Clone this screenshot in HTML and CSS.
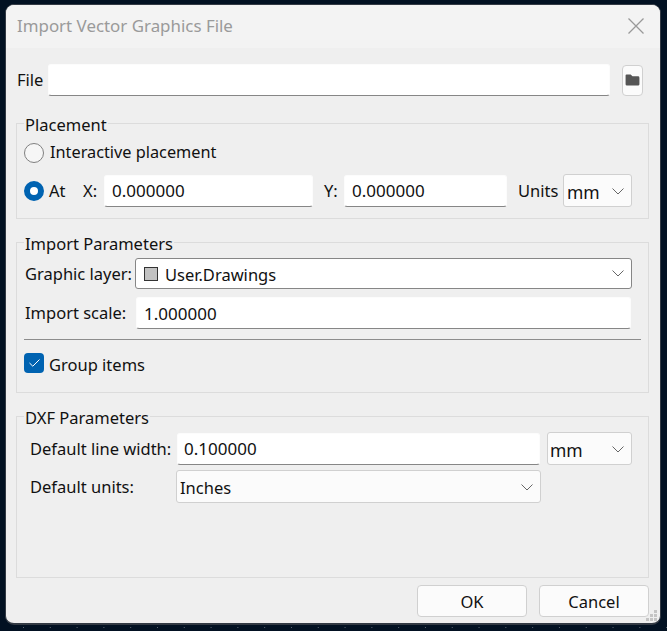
FILE: index.html
```html
<!DOCTYPE html>
<html lang="en">

<head>
    <meta charset="UTF-8">
    <meta name="viewport" content="width=device-width, initial-scale=1.0">
    <title>Import Vector Graphics File</title>
    <link rel="stylesheet" href="styles.css">
</head>

<body>
    <div class="dialog">
        <div class="titlebar">
            <span class="title">Import Vector Graphics File</span>
            <svg class="close" width="18" height="18" viewBox="0 0 18 18">
                <path d="M1.5 1.5 L16.5 16.5 M16.5 1.5 L1.5 16.5" />
            </svg>
        </div>

        <div class="content">
            <div class="file-row">
                <label class="file-label">File</label>
                <input class="field file-field">
                <button class="folder-btn">
                    <svg width="15" height="12" viewBox="0 0 16 13">
                        <path d="M1.5 0.5 H6 L8 2.5 H14 Q15.5 2.5 15.5 4 V11 Q15.5 12.5 14 12.5 H2 Q0.5 12.5 0.5 11 V1.5 Q0.5 0.5 1.5 0.5 Z" />
                    </svg>
                </button>
            </div>

            <fieldset class="group placement">
                <legend>Placement</legend>
                <div class="row radio-row">
                    <span class="radio"></span>
                    <span class="radio-label">Interactive placement</span>
                </div>
                <div class="row at-row">
                    <span class="radio radio-on"></span>
                    <span class="at-label">At</span>
                    <span class="x-label">X:</span>
                    <input class="field x-field" value="0.000000">
                    <span class="y-label">Y:</span>
                    <input class="field y-field" value="0.000000">
                    <span class="units-label">Units</span>
                    <div class="combo units-combo">
                        <span class="mm">mm</span>
                        <svg class="chevron" width="12" height="7" viewBox="0 0 12 7"><path d="M0.5 0.5 L6 6 L11.5 0.5" /></svg>
                    </div>
                </div>
            </fieldset>

            <fieldset class="group import">
                <legend>Import Parameters</legend>
                <div class="row layer-row">
                    <span class="layer-label">Graphic layer:</span>
                    <div class="combo layer-combo">
                        <span class="swatch"></span>
                        <span class="layer-name">User.Drawings</span>
                        <svg class="chevron" width="12" height="7" viewBox="0 0 12 7"><path d="M0.5 0.5 L6 6 L11.5 0.5" /></svg>
                    </div>
                </div>
                <div class="row scale-row">
                    <span class="scale-label">Import scale:</span>
                    <input class="field scale-field" value="1.000000">
                </div>
                <hr class="sep">
                <div class="row check-row">
                    <span class="check">
                        <svg width="11" height="8" viewBox="0 0 11 8"><path d="M0.5 4 L3.8 7.2 L10.5 0.5" /></svg>
                    </span>
                    <span class="check-label">Group items</span>
                </div>
            </fieldset>

            <fieldset class="group dxf">
                <legend>DXF Parameters</legend>
                <div class="row width-row">
                    <span class="dxf-label">Default line width:</span>
                    <input class="field width-field" value="0.100000">
                    <div class="combo dxf-units-combo">
                        <span class="mm">mm</span>
                        <svg class="chevron" width="12" height="7" viewBox="0 0 12 7"><path d="M0.5 0.5 L6 6 L11.5 0.5" /></svg>
                    </div>
                </div>
                <div class="row units-row">
                    <span class="dxf-label">Default units:</span>
                    <div class="combo inches-combo">
                        <span>Inches</span>
                        <svg class="chevron" width="12" height="7" viewBox="0 0 12 7"><path d="M0.5 0.5 L6 6 L11.5 0.5" /></svg>
                    </div>
                </div>
            </fieldset>

            <div class="buttons">
                <button class="btn">OK</button>
                <button class="btn">Cancel</button>
            </div>
        </div>

        <svg class="grip" width="12" height="12" viewBox="0 0 12 12">
            <rect x="8" y="0" width="3" height="3" />
            <rect x="4" y="4" width="3" height="3" />
            <rect x="8" y="4" width="3" height="3" />
            <rect x="0" y="8" width="3" height="3" />
            <rect x="4" y="8" width="3" height="3" />
            <rect x="8" y="8" width="3" height="3" />
        </svg>
    </div>
</body>

</html>
```

FILE: styles.css
```css
* {
    box-sizing: border-box;
}

html,
body {
    height: 100%;
}

body {
    margin: 0;
    overflow: hidden;
    font-family: "Noto Sans", sans-serif;
    font-size: 16.5px;
    color: #111;
    background-color: #021122;
    background-image: linear-gradient(90deg, #5a6470 1px, transparent 1px);
    background-size: 26.8px 1px;
    background-position: 23px 627px;
    background-repeat: repeat-x;
}

.dialog {
    position: relative;
    display: flex;
    flex-direction: column;
    width: 656px;
    height: 621px;
    margin: 4px 0 0 5px;
    background: #efefef;
    border: 1px solid #333a44;
    border-bottom-width: 2px;
    border-radius: 9px;
    overflow: hidden;
}

.titlebar {
    display: flex;
    align-items: center;
    justify-content: space-between;
    flex: none;
    height: 43px;
    padding: 0 15.5px 0 11px;
    background: #f3f3f3;
}

.title {
    margin-bottom: 2px;
    font-size: 16.9px;
    color: #9a9a9a;
}

.close {
    margin-bottom: 2px;
}

.close path {
    fill: none;
    stroke: #999;
    stroke-width: 1.3;
}

.content {
    display: flex;
    flex-direction: column;
    flex: 1;
    padding: 16px 11px 6px 10px;
}

.row {
    display: flex;
    align-items: center;
}

.file-row {
    display: flex;
    align-items: center;
    height: 32px;
    margin-bottom: 16px;
}

.file-label {
    width: 32px;
    padding: 0 0 2px 1px;
}

.field {
    height: 32px;
    padding: 0 7px;
    font: inherit;
    font-size: 17px;
    color: inherit;
    background: #fff;
    border: 1px solid #fcfcfc;
    border-bottom: 1px solid #868686;
    border-radius: 3px;
    outline: none;
}

.file-field {
    width: 562px;
}

.folder-btn {
    display: flex;
    align-items: center;
    justify-content: center;
    width: 21px;
    height: 31px;
    margin-left: 12px;
    padding: 0;
    background: #fbfbfb;
    border: 1px solid #d0d0d0;
    border-radius: 4px;
}

.folder-btn path {
    fill: #555;
}

.group {
    margin: 0 0 12px;
    padding: 0 0 11px 7px;
    width: 633px;
    min-width: 0;
    border: 1px solid #dcdcdc;
}

.group legend {
    height: 23px;
    line-height: 25px;
    margin-left: 0;
    padding: 0 1px;
}

.placement .radio-row {
    height: 32px;
    margin-top: 2px;
}

.radio-label {
    padding: 0 0 2px 1px;
    font-size: 16.3px;
}

.at-row {
    height: 33px;
    margin-top: 5px;
}

.radio {
    flex: none;
    width: 20px;
    height: 20px;
    margin-right: 5px;
    background: #f6f6f6;
    border: 1px solid #808080;
    border-radius: 50%;
}

.radio-on {
    background: #fff;
    border: 6px solid #0063b1;
}

.at-label {
    width: 34px;
}

.x-label {
    width: 21px;
}

.x-field {
    width: 209px;
}

.y-label {
    width: 20px;
    margin-left: 11px;
}

.y-field {
    width: 163px;
}

.units-label {
    width: 45px;
    margin-left: 11px;
}

.combo {
    display: flex;
    align-items: center;
    background: #fbfbfb;
    border: 1px solid #d0d0d0;
    border-radius: 3px;
}

.mm {
    font-size: 17.5px;
}

.chevron {
    flex: none;
    margin-left: auto;
}

.chevron path {
    fill: none;
    stroke: #666;
    stroke-width: 1;
}

.units-combo {
    width: 69px;
    height: 33px;
    padding: 2px 7px 0 3px;
}

.layer-row {
    height: 31px;
    margin-top: 4px;
}

.layer-label {
    width: 111px;
    padding-left: 1px;
}

.layer-combo {
    width: 497px;
    height: 31px;
    padding: 0 7px 0 8px;
    background: #fff;
    border-color: #868686;
}

.layer-name {
    padding-top: 2px;
}

.swatch {
    flex: none;
    width: 14px;
    height: 14px;
    margin-right: 7px;
    background: #c2c2c2;
    border: 1px solid #333;
}

.scale-row {
    height: 32px;
    margin-top: 8px;
}

.scale-label {
    width: 112px;
    padding: 0 0 2px 1px;
}

.scale-field {
    width: 495px;
}

.sep {
    width: 617px;
    height: 1px;
    margin: 10px 0 0;
    background: #8c8c8c;
    border: none;
}

.check-row {
    height: 20px;
    margin-top: 13px;
    margin-bottom: 8px;
}

.check {
    display: flex;
    align-items: center;
    justify-content: center;
    flex: none;
    width: 20px;
    height: 20px;
    margin-right: 5px;
    background: #0063b1;
    border-radius: 4px;
}

.check path {
    fill: none;
    stroke: #fff;
    stroke-width: 1;
}

.check-label {
    padding-top: 3px;
}

.dxf {
    flex: 1;
    margin-bottom: 0;
}

.width-row {
    height: 33px;
    margin-top: 4px;
}

.dxf-label {
    width: 147px;
    margin-left: 6px;
}

.width-field {
    width: 363px;
    padding-left: 6px;
}

.dxf-units-combo {
    width: 85px;
    height: 33px;
    margin-left: 7px;
    padding: 2px 7px 0 2px;
}

.units-row {
    height: 33px;
    margin-top: 5px;
}

.inches-combo {
    width: 365px;
    height: 33px;
    margin-left: -1px;
    padding: 2px 7px 0 3px;
}

.buttons {
    display: flex;
    justify-content: flex-end;
    flex: none;
    gap: 12px;
    margin-top: 7px;
}

.btn {
    width: 110px;
    height: 32px;
    padding: 0;
    font: inherit;
    color: inherit;
    background: #fbfbfb;
    border: 1px solid #d0d0d0;
    border-radius: 4px;
}

.grip {
    position: absolute;
    right: 2px;
    bottom: 1px;
}

.grip rect {
    fill: #c4c4c4;
}
```
